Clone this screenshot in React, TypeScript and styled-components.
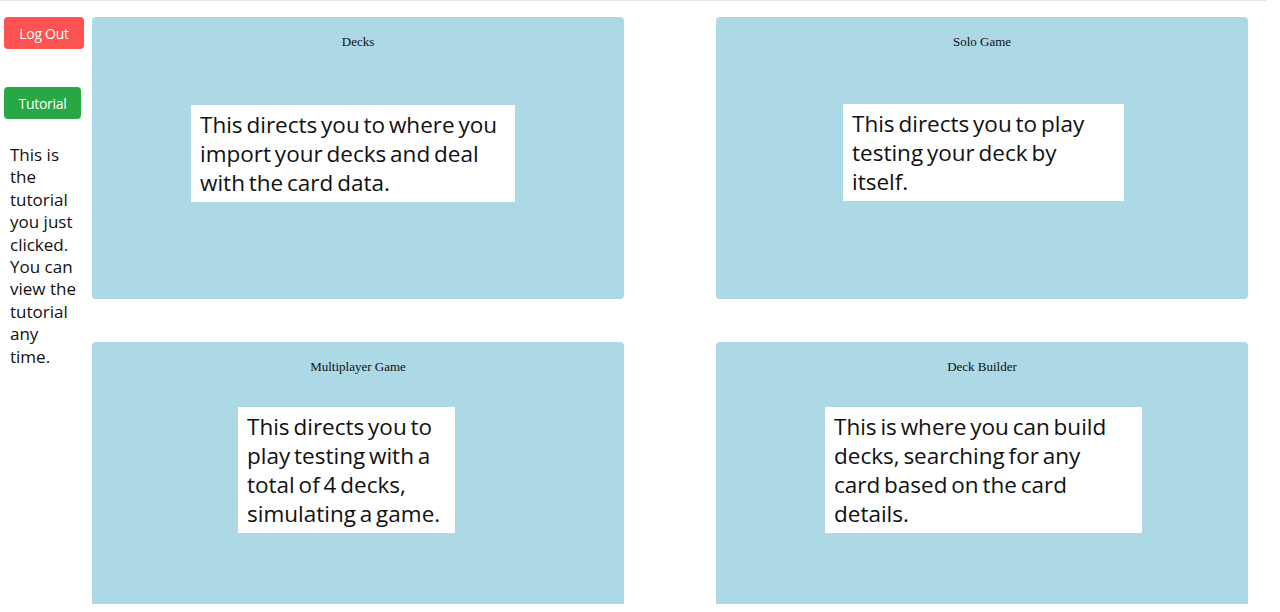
import React from "react";
import styled, { createGlobalStyle } from "styled-components";

const Global = createGlobalStyle`
  html, body { margin: 0; padding: 0; background: #ffffff; }
  body { font-family: "Liberation Serif", serif; }
`;

const Page = styled.div`
  border-top: 1px solid #e4e4e4;
  display: flex;
  align-items: flex-start;
  padding: 16px 0 0 4px;
  width: 1266px;
  box-sizing: border-box;
`;

const Sidebar = styled.aside`
  width: 80px;
  display: flex;
  flex-direction: column;
  align-items: flex-start;
  flex-shrink: 0;
`;

const Button = styled.button<{ $tone: "red" | "green"; $w: number }>`
  width: ${(p) => p.$w}px;
  height: 32px;
  border: none;
  border-radius: 4px;
  background: ${(p) => (p.$tone === "red" ? "#ff5252" : "#28a745")};
  color: #ffffff;
  font-family: "Open Sans", sans-serif;
  font-size: 14px;
  letter-spacing: -0.3px;
  padding: 0;
  cursor: pointer;
`;

const LogOut = styled(Button)`
  margin-bottom: 38px;
`;

const Help = styled.p`
  margin: 25px 0 0 6px;
  font-family: "Open Sans", sans-serif;
  font-size: 17px;
  line-height: 22.4px;
  color: #111111;
  letter-spacing: 0;
  white-space: nowrap;
`;

const Grid = styled.main`
  margin-left: 8px;
  display: grid;
  grid-template-columns: 532px 532px;
  grid-template-rows: 282px 262px;
  column-gap: 92px;
  row-gap: 43px;
`;

const Card = styled.section<{ $last?: boolean }>`
  position: relative;
  background: #add8e6;
  border-radius: ${(p) => (p.$last ? "4px 4px 0 0" : "4px")};
  display: flex;
  flex-direction: column;
  align-items: center;
`;

const Title = styled.h2`
  margin: 17px 0 0;
  font-family: "Liberation Serif", serif;
  font-weight: 400;
  font-size: 13px;
  line-height: 16px;
  color: #111111;
`;

const Tip = styled.div`
  position: absolute;
  background: #ffffff;
  box-sizing: border-box;
  padding: 5px 9px;
  font-family: "Open Sans", sans-serif;
  font-size: 22.5px;
  line-height: 29px;
  letter-spacing: 0;
  word-spacing: -2px;
  color: #111111;
  white-space: nowrap;
`;

type CardData = {
  title: string;
  lines: string[];
  left: number;
  top: number;
  width: number;
  last?: boolean;
};

const cards: CardData[] = [
  {
    title: "Decks",
    lines: ["This directs you to where you", "import your decks and deal", "with the card data."],
    left: 99,
    top: 88,
    width: 324,
  },
  {
    title: "Solo Game",
    lines: ["This directs you to play", "testing your deck by", "itself."],
    left: 127,
    top: 87,
    width: 281,
  },
  {
    title: "Multiplayer Game",
    lines: ["This directs you to", "play testing with a", "total of 4 decks,", "simulating a game."],
    left: 146,
    top: 65,
    width: 217,
    last: true,
  },
  {
    title: "Deck Builder",
    lines: ["This is where you can build", "decks, searching for any", "card based on the card", "details."],
    left: 109,
    top: 65,
    width: 317,
    last: true,
  },
];

export default function App() {
  return (
    <>
      <Global />
      <Page>
        <Sidebar>
          <LogOut $tone="red" $w={80}>Log Out</LogOut>
          <Button $tone="green" $w={77}>Tutorial</Button>
          <Help>
            This is<br />the<br />tutorial<br />you just<br />clicked.<br />You can<br />view the<br />tutorial<br />any<br />time.
          </Help>
        </Sidebar>
        <Grid>
          {cards.map((c) => (
            <Card key={c.title} $last={c.last}>
              <Title>{c.title}</Title>
              <Tip style={{ left: c.left, top: c.top, width: c.width }}>
                {c.lines.map((l, i) => (
                  <React.Fragment key={i}>
                    {l}
                    {i < c.lines.length - 1 && <br />}
                  </React.Fragment>
                ))}
              </Tip>
            </Card>
          ))}
        </Grid>
      </Page>
    </>
  );
}
